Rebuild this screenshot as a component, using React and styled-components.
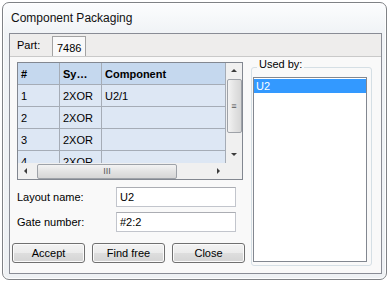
import React from "react";
import styled, { createGlobalStyle } from "styled-components";

const GlobalStyle = createGlobalStyle`
  body {
    margin: 0;
    background: #ffffff;
    font-family: "Liberation Sans", Arial, sans-serif;
    font-size: 11px;
    color: #000;
  }
`;

const Window = styled.div`
  box-sizing: border-box;
  margin: 2px 0 0 2px;
  width: 385px;
  height: 278px;
  border: 1px solid #7f8286;
  border-radius: 7px;
  background: linear-gradient(#fcfdfe, #f0f3f6 30px, #eef1f4);
  box-shadow: inset 0 0 0 1px rgba(255, 255, 255, 0.85);
  padding: 0 4px 5px 6px;
  display: flex;
  flex-direction: column;
`;

const TitleBar = styled.div`
  height: 30px;
  display: flex;
  align-items: center;
  padding-left: 2px;
  font-size: 12px;
  color: #111;
`;

const Panel = styled.div`
  flex: 1;
  border: 1px solid #898c95;
  display: flex;
  flex-direction: column;
  background: #eeedec;
`;

const Strip = styled.div`
  height: 22px;
  display: flex;
  align-items: flex-start;
  padding-left: 7px;
`;

const PartLabel = styled.span`
  margin-top: 5px;
  width: 35px;
`;

const Tab = styled.div`
  margin-top: 2px;
  height: 20px;
  width: 34px;
  box-sizing: border-box;
  border: 1px solid #a3a3a3;
  border-bottom: none;
  background: #f9f9f9;
  display: flex;
  align-items: center;
  padding-left: 4px;
  margin-bottom: -1px;
  position: relative;
  z-index: 1;
  padding-top: 2px;
`;

const Page = styled.div`
  flex: 1;
  border-top: 1px solid #c9c9c9;
  background: #f9f9f9;
  display: flex;
  align-items: flex-start;
  padding: 5px 0 0 2px;
`;

const LeftColumn = styled.div`
  width: 234px;
  display: flex;
  flex-direction: column;
`;

const GridBox = styled.div`
  margin-left: 5px;
  width: 226px;
  height: 118px;
  box-sizing: border-box;
  border: 1px solid #828790;
  display: grid;
  grid-template-columns: 208px 16px;
  grid-template-rows: 100px 16px;
  background: #f0f0f0;
`;

const Cells = styled.div`
  overflow: hidden;
  background: #dde7f4;
`;

const Row = styled.div`
  display: grid;
  grid-template-columns: 42px 42px 124px;
  height: 22px;
  background: ${(p) => (p.$header ? "#c5d8ee" : "#dde7f4")};
  font-weight: ${(p) => (p.$header ? 700 : 400)};
`;

const Cell = styled.div`
  box-sizing: border-box;
  border-right: 1px solid #a5acb6;
  border-bottom: 1px solid #a5acb6;
  padding-left: 3px;
  display: flex;
  align-items: center;
  white-space: nowrap;
  overflow: hidden;
`;

const ScrollTrack = styled.div`
  background: #f0f0f0;
  display: flex;
  flex-direction: ${(p) => (p.$vertical ? "column" : "row")};
  align-items: center;
  justify-content: space-between;
`;

const ArrowButton = styled.div`
  width: 16px;
  height: 16px;
  flex: none;
  display: flex;
  align-items: center;
  justify-content: center;
`;

const Thumb = styled.div`
  box-sizing: border-box;
  border: 1px solid #9ea2a8;
  border-radius: 2px;
  background: ${(p) =>
    p.$vertical
      ? "linear-gradient(90deg, #f3f3f3, #e3e3e3 50%, #d6d6d6)"
      : "linear-gradient(#f3f3f3, #e3e3e3 50%, #d6d6d6)"};
  display: flex;
  align-items: center;
  justify-content: center;
  color: #555;
  font-size: 9px;
  ${(p) =>
    p.$vertical
      ? "width: 15px; height: 54px; align-self: center;"
      : "height: 15px; width: 140px; margin-right: auto; margin-left: 3px;"}
`;

const Corner = styled.div`
  background: #f0f0f0;
`;

const FieldRow = styled.div`
  display: flex;
  align-items: center;
  padding-left: 5px;
  margin-top: ${(p) => p.$gap}px;
`;

const FieldLabel = styled.span`
  width: 99px;
`;

const TextBox = styled.div`
  box-sizing: border-box;
  width: 120px;
  height: 20px;
  border: 1px solid #c2c5cc;
  border-top-color: #abadb3;
  background: #fff;
  display: flex;
  align-items: center;
  padding-left: 3px;
`;

const Buttons = styled.div`
  display: flex;
  gap: 7px;
  margin-top: 11px;
`;

const Button = styled.button`
  box-sizing: border-box;
  width: 73px;
  height: 20px;
  border: 1px solid #707070;
  border-radius: 3px;
  background: linear-gradient(#f3f3f3, #ebebeb 50%, #dedede 50%, #d4d4d4);
  box-shadow: inset 0 0 0 1px #fbfbfb;
  font-family: "Liberation Sans", Arial, sans-serif;
  font-size: 11px;
  color: #000;
  padding: 0;
`;

const Group = styled.fieldset`
  margin: -4px 0 0 5px;
  width: 121px;
  height: 208px;
  box-sizing: border-box;
  border: 1px solid #d5dfe5;
  border-radius: 3px;
  padding: 0 4px 3px 1px;
  min-width: 0;
`;

const Legend = styled.legend`
  margin-left: 4px;
  padding: 0 2px 6px;
  line-height: 13px;
`;

const ListBox = styled.div`
  box-sizing: border-box;
  height: 185px;
  border: 1px solid #828790;
  background: #fff;
  padding-top: 1px;
`;

const ListItem = styled.div`
  height: 14px;
  line-height: 14px;
  padding-left: 2px;
  background: ${(p) => (p.$selected ? "#3399ff" : "transparent")};
  color: ${(p) => (p.$selected ? "#fff" : "#000")};
`;

const Arrow = ({ dir }) => {
  const pts = {
    up: "4,2 7,5 1,5",
    down: "1,2 7,2 4,5",
    left: "5,1 5,7 2,4",
    right: "3,1 3,7 6,4",
  }[dir];
  return (
    <svg width="8" height="8" viewBox="0 0 8 8">
      <polygon points={pts} fill="#3c3c3c" />
    </svg>
  );
};

const rows = [
  ["1", "2XOR", "U2/1"],
  ["2", "2XOR", ""],
  ["3", "2XOR", ""],
  ["4", "2XOR", ""],
];

export default function App() {
  return (
    <>
      <GlobalStyle />
      <Window>
        <TitleBar>Component Packaging</TitleBar>
        <Panel>
          <Strip>
            <PartLabel>Part:</PartLabel>
            <Tab>7486</Tab>
          </Strip>
          <Page>
            <LeftColumn>
              <GridBox>
                <Cells>
                  <Row $header>
                    <Cell>#</Cell>
                    <Cell>Sy…</Cell>
                    <Cell>Component</Cell>
                  </Row>
                  {rows.map((r) => (
                    <Row key={r[0]}>
                      {r.map((c, i) => (
                        <Cell key={i}>{c}</Cell>
                      ))}
                    </Row>
                  ))}
                </Cells>
                <ScrollTrack $vertical>
                  <ArrowButton>
                    <Arrow dir="up" />
                  </ArrowButton>
                  <Thumb $vertical>≡</Thumb>
                  <div style={{ flex: 1 }} />
                  <ArrowButton>
                    <Arrow dir="down" />
                  </ArrowButton>
                </ScrollTrack>
                <ScrollTrack>
                  <ArrowButton>
                    <Arrow dir="left" />
                  </ArrowButton>
                  <Thumb>III</Thumb>
                  <ArrowButton>
                    <Arrow dir="right" />
                  </ArrowButton>
                </ScrollTrack>
                <Corner />
              </GridBox>
              <FieldRow $gap={7}>
                <FieldLabel>Layout name:</FieldLabel>
                <TextBox>U2</TextBox>
              </FieldRow>
              <FieldRow $gap={5}>
                <FieldLabel>Gate number:</FieldLabel>
                <TextBox>#2:2</TextBox>
              </FieldRow>
              <Buttons>
                <Button>Accept</Button>
                <Button>Find free</Button>
                <Button>Close</Button>
              </Buttons>
            </LeftColumn>
            <Group>
              <Legend>Used by:</Legend>
              <ListBox>
                <ListItem $selected>U2</ListItem>
              </ListBox>
            </Group>
          </Page>
        </Panel>
      </Window>
    </>
  );
}
